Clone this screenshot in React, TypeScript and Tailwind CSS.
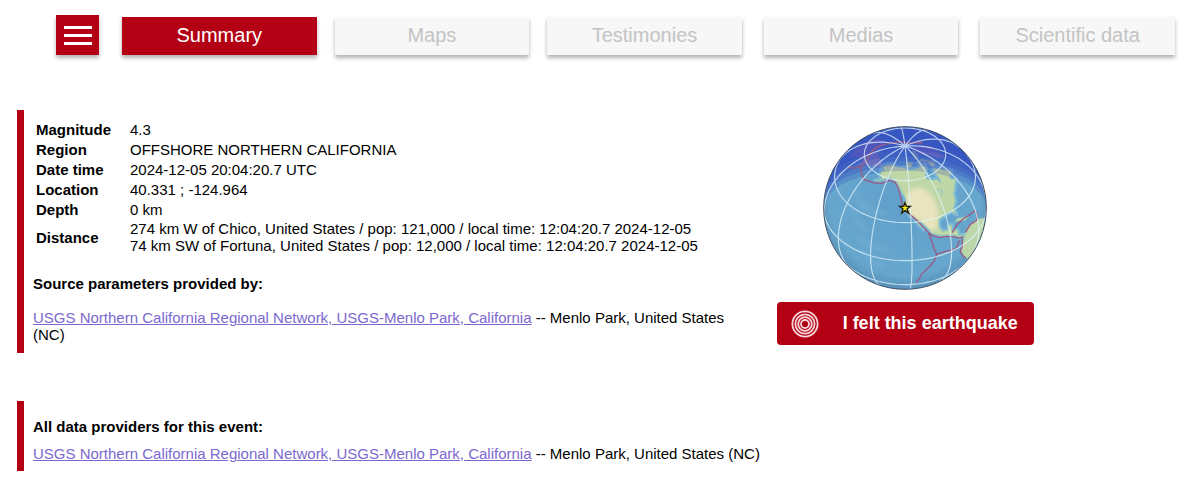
const tabs = [
  { label: "Summary", className: "bg-[#b40014] text-white" },
  { label: "Maps", className: "ml-[18px] bg-[#f7f7f7] text-[#c4c4c4]" },
  { label: "Testimonies", className: "ml-[18px] bg-[#f7f7f7] text-[#c4c4c4]" },
  { label: "Medias", className: "ml-[22px] bg-[#f7f7f7] text-[#c4c4c4]" },
  { label: "Scientific data", className: "ml-[22px] bg-[#f7f7f7] text-[#c4c4c4]" },
];

const details = [
  { label: "Magnitude", lines: ["4.3"] },
  { label: "Region", lines: ["OFFSHORE NORTHERN CALIFORNIA"] },
  { label: "Date time", lines: ["2024-12-05 20:04:20.7 UTC"] },
  { label: "Location", lines: ["40.331 ; -124.964"] },
  { label: "Depth", lines: ["0 km"] },
  {
    label: "Distance",
    lines: [
      "274 km W of Chico, United States / pop: 121,000 / local time: 12:04:20.7 2024-12-05",
      "74 km SW of Fortuna, United States / pop: 12,000 / local time: 12:04:20.7 2024-12-05",
    ],
  },
];

type Point = [number, number]; // lon, lat

const R = 244;
const LON0 = -124.964;
const LAT0 = 40.331;
const rad = (deg: number) => (deg * Math.PI) / 180;

// Orthographic projection centred on the epicentre
function project([lon, lat]: Point) {
  const dl = rad(lon - LON0);
  const p = rad(lat);
  const p0 = rad(LAT0);
  return {
    x: R * Math.cos(p) * Math.sin(dl),
    y: -R * (Math.cos(p0) * Math.sin(p) - Math.sin(p0) * Math.cos(p) * Math.cos(dl)),
    front: Math.sin(p0) * Math.sin(p) + Math.cos(p0) * Math.cos(p) * Math.cos(dl) >= 0,
  };
}

// Open line, broken where it goes behind the globe
function linePath(points: Point[]) {
  let d = "";
  let pen = false;
  points.forEach((pt) => {
    const { x, y, front } = project(pt);
    if (front) d += `${pen ? "L" : "M"}${x.toFixed(1)} ${y.toFixed(1)}`;
    pen = front;
  });
  return d;
}

// Closed area, hidden points are pushed out past the limb
function areaPath(points: Point[]) {
  return (
    points
      .map((pt, i) => {
        const { x, y, front } = project(pt);
        const k = front ? 1 : (R * 1.05) / Math.hypot(x, y);
        return `${i ? "L" : "M"}${(x * k).toFixed(1)} ${(y * k).toFixed(1)}`;
      })
      .join("") + "Z"
  );
}

const range = (from: number, to: number, step: number) =>
  Array.from({ length: Math.floor((to - from) / step) + 1 }, (_, i) => from + i * step);

const graticule = [
  ...[-30, 0, 30, 60].map((lat) => linePath(range(-180, 180, 3).map((lon): Point => [lon, lat]))),
  ...range(-180, 150, 30).map((lon) => linePath(range(-90, 90, 3).map((lat): Point => [lon, lat]))),
].join("");

// Each step further behind the terminator gets darker
const night = [0, 4, 8, 12, 18].map((deg) => {
  const cy = -R * 0.889 * Math.sin(rad(deg));
  const rx = R * Math.cos(rad(deg));
  const ry = rx * 0.459;
  return `M-260 -260V${cy}H${-rx}A${rx} ${ry} 0 0 1 ${rx} ${cy}H260V-260Z`;
});

const northAmerica: Point[] = [
  [-166, 68], [-156, 71], [-141, 70], [-128, 70], [-115, 68], [-108, 68], [-96, 68], [-94, 72], [-88, 68],
  [-82, 69], [-87, 65], [-94, 61], [-94, 58], [-88, 56], [-82, 55], [-80, 51], [-78, 55], [-78, 62], [-72, 62],
  [-65, 59], [-60, 55], [-56, 52], [-66, 50], [-65, 48], [-60, 46], [-67, 44], [-70, 42], [-74, 40], [-76, 35],
  [-81, 31], [-80, 26], [-82, 28], [-84, 30], [-90, 30], [-97, 28], [-98, 23], [-96, 19], [-91, 18], [-90, 21],
  [-87, 21], [-88, 16], [-83, 15], [-83, 10], [-80, 9], [-78, 8], [-82, 8], [-86, 12], [-93, 15], [-97, 16],
  [-105, 20], [-106, 23], [-112, 30], [-114, 31], [-110, 24], [-114, 28], [-117, 33], [-121, 35], [-124, 40],
  [-124, 47], [-128, 51], [-134, 57], [-140, 60], [-148, 61], [-153, 59], [-160, 56], [-164, 55], [-157, 58],
  [-162, 60], [-165, 63], [-161, 65], [-168, 66],
];

const drylands: Point[] = [
  [-124, 50], [-114, 54], [-104, 53], [-97, 47], [-95, 38], [-97, 30], [-100, 22], [-106, 22], [-113, 31],
  [-119, 34], [-124, 41],
];

const otherLand: Point[][] = [
  // South America
  [[-77, 8], [-72, 12], [-62, 11], [-52, 5], [-45, -2], [-50, -20], [-65, -25], [-71, -20], [-76, -14], [-81, -5], [-80, 1]],
  // Cuba and Hispaniola
  [[-84, 22], [-80, 23], [-75, 21], [-69, 19], [-74, 18], [-78, 20]],
  // Arctic islands
  [[-125, 72], [-118, 75], [-105, 73], [-112, 70], [-118, 70]],
  [[-90, 73], [-80, 74], [-68, 69], [-62, 66], [-70, 63], [-76, 65], [-74, 69]],
  [[-95, 77], [-90, 82], [-65, 83], [-78, 77], [-88, 75]],
];

const shadedLand: Point[][] = [
  // Greenland
  [[-70, 77], [-60, 82], [-32, 83], [-20, 78], [-24, 70], [-42, 60], [-52, 65], [-55, 71]],
  // Eastern Siberia
  [[-170, 66], [180, 69], [160, 70], [140, 73], [115, 74], [105, 60], [120, 50], [135, 45], [141, 53], [155, 59], [157, 51], [163, 58], [172, 61], [180, 63]],
];

const plates: Point[][] = [
  [[-123, 39], [-121, 36], [-116, 32], [-110, 25], [-107, 21], [-104, 18], [-99, 15], [-93, 14], [-87, 11], [-83, 8], [-79, 7]],
  [[-107, 21], [-105, 13], [-104, 8], [-102, 2], [-104, -4], [-108, -9], [-113, -16], [-114, -22], [-116, -26]],
  [[-102, 2], [-95, 2], [-90, 1], [-85, 1], [-83, 6]],
  [[-88, 15], [-82, 19], [-76, 20], [-68, 19], [-61, 18], [-59, 14], [-61, 10], [-70, 12], [-76, 9]],
  [[-80, 6], [-80, 0], [-82, -5], [-78, -12], [-73, -18]],
  [[-127, 41], [-128, 44], [-130, 49], [-133, 54], [-138, 58], [-146, 59], [-155, 55], [-165, 53], [-178, 51], [172, 53], [164, 55], [158, 50], [150, 45]],
  [[164, 55], [162, 60], [150, 64], [136, 69], [128, 76], [100, 83], [0, 84], [-10, 76]],
];

const relief: Point[][] = [
  [[-178, 42], [-169, 35], [-158, 31]],
  [[-174, 29], [-164, 23], [-156, 20], [-153, 18]],
  [[-166, 38], [-155, 34], [-140, 35]],
  [[-161, 12], [-148, 8], [-137, 9]],
  [[-157, 3], [-149, -4], [-139, -8]],
];

function Globe() {
  return (
    <svg viewBox="-249 -249 498 498" className="size-[166px]" role="img" aria-label="Epicentre on the globe">
      <defs>
        <clipPath id="disc">
          <circle r={R} />
        </clipPath>
        <clipPath id="na">
          <path d={areaPath(northAmerica)} />
        </clipPath>
        <filter id="soft" x="-20%" y="-20%" width="140%" height="140%">
          <feGaussianBlur stdDeviation="7" />
        </filter>
        <radialGradient id="sea" cx="50%" cy="46%" r="54%">
          <stop offset="0" stopColor="#5f9fca" />
          <stop offset="0.85" stopColor="#67a6cd" />
          <stop offset="1" stopColor="#5890b9" />
        </radialGradient>
      </defs>
      <g clipPath="url(#disc)">
        <circle r={R} fill="url(#sea)" />
        <g fill="none" stroke="#83bbda" strokeWidth="12" opacity="0.35" filter="url(#soft)">
          {relief.map((pts, i) => (
            <path key={i} d={linePath(pts)} />
          ))}
        </g>
        <path d={areaPath(northAmerica)} fill="none" stroke="#8cc6e0" strokeWidth="14" strokeLinejoin="round" opacity="0.6" />
        <g strokeLinejoin="round" stroke="#8fc4b4" strokeWidth="2">
          <path d={areaPath(northAmerica)} fill="#bfd6a6" />
          {otherLand.map((pts, i) => (
            <path key={i} d={areaPath(pts)} fill="#bcd6aa" />
          ))}
        </g>
        <g clipPath="url(#na)">
          <path d={areaPath(drylands)} fill="#e9e4bd" filter="url(#soft)" />
        </g>
        {/* Great Lakes */}
        <path d={linePath([[-91, 47], [-86, 48], [-84, 46], [-87, 43]])} fill="none" stroke="#93c0bd" strokeWidth="3" />
        <g fill="#c6a8bd" opacity="0.75">
          {shadedLand.map((pts, i) => (
            <path key={i} d={areaPath(pts)} />
          ))}
        </g>
        <g fill="#2430bd" fillOpacity="0.2">
          {night.map((d) => (
            <path key={d} d={d} />
          ))}
        </g>
        <g fill="none" stroke="#9a5a83" strokeWidth="4" strokeLinejoin="round">
          {plates.map((pts, i) => (
            <path key={i} d={linePath(pts)} />
          ))}
        </g>
        <path d={graticule} fill="none" stroke="#e2f5fc" strokeOpacity="0.75" strokeWidth="3.5" />
      </g>
      <circle r={R} fill="none" stroke="#3d4f63" strokeWidth="3" />
      <path
        d="M0 -16L4 -5H16L6 3L10 15L0 8L-10 15L-6 3L-16 -5H-4Z"
        fill="#f7ee1c"
        stroke="#1f1f08"
        strokeWidth="4"
      />
    </svg>
  );
}

function ProviderLink() {
  return (
    <a href="#usgs" className="text-[#7b68cf] underline">
      USGS Northern California Regional Network, USGS-Menlo Park, California
    </a>
  );
}

export default function App() {
  return (
    <div className="bg-white pb-4 font-['Liberation_Sans',Arial,sans-serif] text-[15px] leading-[17px] text-black">
      <header className="flex items-end pt-[15px] pr-[25px] pl-14">
        <button
          aria-label="Menu"
          className="flex h-10 w-[43px] shrink-0 flex-col items-center justify-center gap-[5px] bg-[#b40014] shadow-[0_3px_4px_rgba(0,0,0,0.3)]"
        >
          <span className="h-[3px] w-7 bg-white" />
          <span className="h-[3px] w-7 bg-white" />
          <span className="h-[3px] w-7 bg-white" />
        </button>
        <nav className="ml-[23px] flex flex-1">
          {tabs.map((tab) => (
            <button
              key={tab.label}
              className={`h-[38px] flex-1 pb-0.5 text-[20px] leading-6 shadow-[0_3px_4px_rgba(0,0,0,0.3)] ${tab.className}`}
            >
              {tab.label}
            </button>
          ))}
        </nav>
      </header>

      <main className="mt-[55px] pl-[17px]">
        <div className="flex items-start">
          <section className="w-[61%] border-l-[7px] border-[#b40014] pt-[9px] pb-[10px] pl-[9px]">
            <table>
              <tbody>
                {details.map((row) => (
                  <tr key={row.label} className="h-5">
                    <th scope="row" className="pr-[19px] pl-[3px] text-left align-middle font-bold">
                      {row.label}
                    </th>
                    <td className="py-px align-middle">
                      {row.lines.map((line) => (
                        <div key={line}>{line}</div>
                      ))}
                    </td>
                  </tr>
                ))}
              </tbody>
            </table>
            <h2 className="mt-5 font-bold">Source parameters provided by:</h2>
            <p className="mt-[17px]">
              <ProviderLink /> -- Menlo Park, United States (NC)
            </p>
          </section>

          <aside className="ml-[38px] flex flex-col items-center pt-[15px]">
            <Globe />
            <button className="mt-[11px] flex h-[43px] items-center rounded-[4px] bg-[#b40014] pr-4 pl-[14px] text-[18px] font-bold text-white">
              <svg viewBox="0 0 28 28" className="mr-6 size-7" fill="none" stroke="#f7d4d8" strokeWidth="1.8">
                <circle cx="14" cy="14" r="12.6" />
                <circle cx="14" cy="14" r="9.6" />
                <circle cx="14" cy="14" r="6.8" />
                <circle cx="14" cy="14" r="4" />
              </svg>
              I felt this earthquake
            </button>
          </aside>
        </div>

        <section className="mt-12 border-l-[7px] border-[#b40014] pt-[17px] pb-[9px] pl-[9px]">
          <h2 className="font-bold">All data providers for this event:</h2>
          <p className="mt-[10px]">
            <ProviderLink /> -- Menlo Park, United States (NC)
          </p>
        </section>
      </main>
    </div>
  );
}
